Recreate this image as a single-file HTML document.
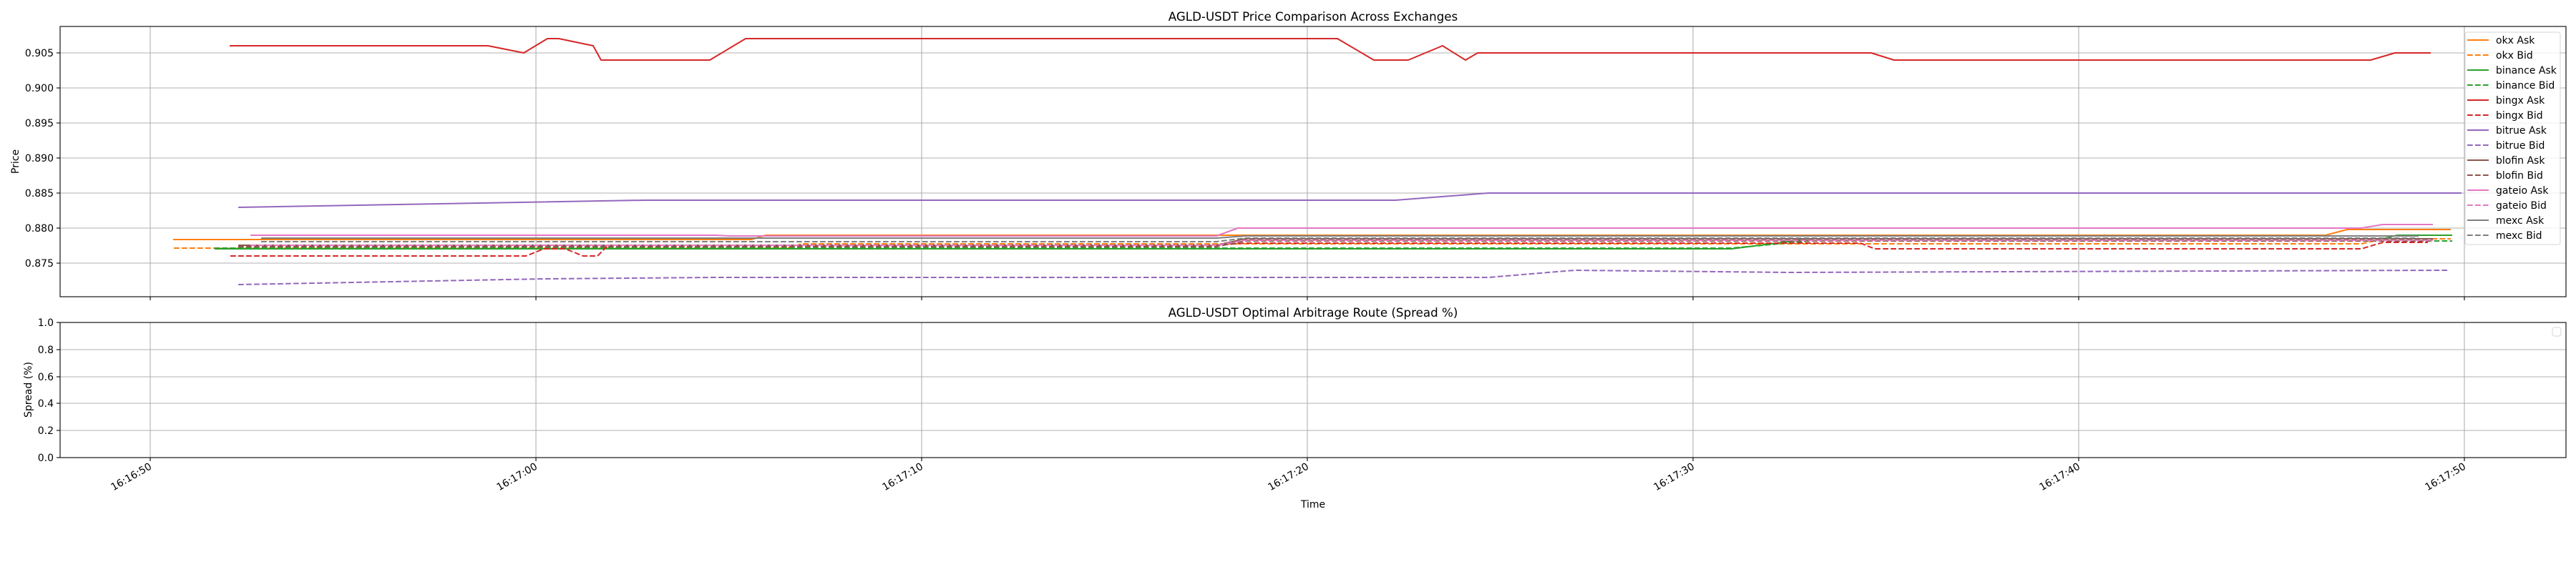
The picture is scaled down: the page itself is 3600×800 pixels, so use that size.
<!DOCTYPE html>
<html><head><meta charset="utf-8"><style>
html,body{margin:0;padding:0;background:#fff;}
svg{display:block;font-family:"DejaVu Sans","Liberation Sans",sans-serif;}
</style></head><body>
<svg width="3600" height="800" viewBox="0 0 3600 800" xmlns="http://www.w3.org/2000/svg">
<rect width="3600" height="800" fill="#fff"/>
<!-- top axes grid -->
<g stroke="#b0b0b0" stroke-width="1.1">
<line x1="84" y1="74" x2="3586" y2="74"/><line x1="84" y1="123" x2="3586" y2="123"/><line x1="84" y1="172" x2="3586" y2="172"/><line x1="84" y1="221" x2="3586" y2="221"/><line x1="84" y1="270" x2="3586" y2="270"/><line x1="84" y1="319" x2="3586" y2="319"/><line x1="84" y1="368" x2="3586" y2="368"/>
<line x1="210" y1="37" x2="210" y2="415"/><line x1="749" y1="37" x2="749" y2="415"/><line x1="1288" y1="37" x2="1288" y2="415"/><line x1="1827" y1="37" x2="1827" y2="415"/><line x1="2366" y1="37" x2="2366" y2="415"/><line x1="2905" y1="37" x2="2905" y2="415"/><line x1="3444" y1="37" x2="3444" y2="415"/>
</g>
<!-- bottom axes grid -->
<g stroke="#b0b0b0" stroke-width="1.1">
<line x1="84" y1="489" x2="3586" y2="489"/><line x1="84" y1="527" x2="3586" y2="527"/><line x1="84" y1="564" x2="3586" y2="564"/><line x1="84" y1="602" x2="3586" y2="602"/>
<line x1="210" y1="451" x2="210" y2="640"/><line x1="749" y1="451" x2="749" y2="640"/><line x1="1288" y1="451" x2="1288" y2="640"/><line x1="1827" y1="451" x2="1827" y2="640"/><line x1="2366" y1="451" x2="2366" y2="640"/><line x1="2905" y1="451" x2="2905" y2="640"/><line x1="3444" y1="451" x2="3444" y2="640"/>
</g>
<!-- data lines -->
<g fill="none" stroke-width="2" stroke-linejoin="round">
<polyline stroke="#ff7f0e" points="242,335 1050,335 1070,329 3250,329 3280,321 3425,321"/>
<polyline stroke="#ff7f0e" stroke-dasharray="7.7,3.3" points="243,347 1100,347 1120,341 3300,341 3330,334 3425,334"/>
<polyline stroke="#2ca02c" points="300,348 2420,348 2530,334 3330,334 3350,329 3427,329"/>
<polyline stroke="#2ca02c" stroke-dasharray="7.7,3.3" points="300,347 2420,347 2530,337 3427,337"/>
<polyline stroke="#d62728" points="321,64 682,64 732,74 765,54 781,54 829,64 840,84 992,84 1042,54 1869,54 1920,84 1968,84 2016,64 2048,84 2065,74 2615,74 2647,84 3313,84 3347,74 3397,74"/>
<polyline stroke="#d62728" stroke-dasharray="7.7,3.3" points="322,358 735,358 760,348 790,348 815,358 835,358 850,343 1700,343 1740,340 2600,340 2620,348 3300,348 3330,339 3393,339"/>
<polyline stroke="#9467bd" points="333,290 900,280 1950,280 2080,270 3440,270"/>
<polyline stroke="#9467bd" stroke-dasharray="7.7,3.3" points="333,398 760,390 1000,388 2080,388 2200,378 2500,381 3420,378"/>
<polyline stroke="#8c564b" points="333,343 1700,343 1740,334 3400,334"/>
<polyline stroke="#8c564b" stroke-dasharray="7.7,3.3" points="333,345 1700,345 1740,337 3400,337"/>
<polyline stroke="#e377c2" points="350,329 1000,329 1020,330 1700,330 1730,319 3300,319 3330,314 3400,314"/>
<polyline stroke="#e377c2" stroke-dasharray="7.7,3.3" points="350,343 1700,343 1740,336 3400,336"/>
<polyline stroke="#7f7f7f" points="365,333 1700,333 1740,330 3380,330"/>
<polyline stroke="#7f7f7f" stroke-dasharray="7.7,3.3" points="365,338 1700,338 1740,333 3380,333"/>
</g>
<!-- axes frames -->
<rect x="84" y="37" width="3502" height="378" fill="none" stroke="#000" stroke-width="1.1"/>
<rect x="84" y="451" width="3502" height="189" fill="none" stroke="#000" stroke-width="1.1"/>
<!-- ticks -->
<g stroke="#000" stroke-width="1.1">
<line x1="79" y1="74" x2="84" y2="74"/><line x1="79" y1="123" x2="84" y2="123"/><line x1="79" y1="172" x2="84" y2="172"/><line x1="79" y1="221" x2="84" y2="221"/><line x1="79" y1="270" x2="84" y2="270"/><line x1="79" y1="319" x2="84" y2="319"/><line x1="79" y1="368" x2="84" y2="368"/>
<line x1="79" y1="451" x2="84" y2="451"/><line x1="79" y1="489" x2="84" y2="489"/><line x1="79" y1="527" x2="84" y2="527"/><line x1="79" y1="564" x2="84" y2="564"/><line x1="79" y1="602" x2="84" y2="602"/><line x1="79" y1="640" x2="84" y2="640"/>
<line x1="210" y1="415" x2="210" y2="420"/><line x1="749" y1="415" x2="749" y2="420"/><line x1="1288" y1="415" x2="1288" y2="420"/><line x1="1827" y1="415" x2="1827" y2="420"/><line x1="2366" y1="415" x2="2366" y2="420"/><line x1="2905" y1="415" x2="2905" y2="420"/><line x1="3444" y1="415" x2="3444" y2="420"/>
<line x1="210" y1="640" x2="210" y2="645"/><line x1="749" y1="640" x2="749" y2="645"/><line x1="1288" y1="640" x2="1288" y2="645"/><line x1="1827" y1="640" x2="1827" y2="645"/><line x1="2366" y1="640" x2="2366" y2="645"/><line x1="2905" y1="640" x2="2905" y2="645"/><line x1="3444" y1="640" x2="3444" y2="645"/>
</g>
<g font-size="14" fill="#000" text-anchor="end">
<text x="75" y="79">0.905</text><text x="75" y="128">0.900</text><text x="75" y="177">0.895</text><text x="75" y="226">0.890</text><text x="75" y="275">0.885</text><text x="75" y="324">0.880</text><text x="75" y="373">0.875</text>
<text x="75" y="456">1.0</text><text x="75" y="494">0.8</text><text x="75" y="532">0.6</text><text x="75" y="569">0.4</text><text x="75" y="607">0.2</text><text x="75" y="645">0.0</text>
<text transform="translate(213,655) rotate(-30)">16:16:50</text>
<text transform="translate(752,655) rotate(-30)">16:17:00</text>
<text transform="translate(1291,655) rotate(-30)">16:17:10</text>
<text transform="translate(1830,655) rotate(-30)">16:17:20</text>
<text transform="translate(2369,655) rotate(-30)">16:17:30</text>
<text transform="translate(2908,655) rotate(-30)">16:17:40</text>
<text transform="translate(3447,655) rotate(-30)">16:17:50</text>
</g>
<g font-size="14" fill="#000" text-anchor="middle">
<text x="1835" y="710">Time</text>
<text transform="translate(26,226) rotate(-90)">Price</text>
<text transform="translate(44,545) rotate(-90)">Spread (%)</text>
<text x="1835" y="29" font-size="16.7">AGLD-USDT Price Comparison Across Exchanges</text>
<text x="1835" y="443" font-size="16.7">AGLD-USDT Optimal Arbitrage Route (Spread %)</text>
</g>
<!-- legend -->
<rect x="3445" y="45" width="133" height="297" rx="3" fill="#fff" fill-opacity="0.8" stroke="#d6d6d6" stroke-width="1"/>
<g stroke-width="2">
<line x1="3448" y1="56" x2="3478" y2="56" stroke="#ff7f0e"/>
<line x1="3448" y1="77" x2="3478" y2="77" stroke="#ff7f0e" stroke-dasharray="7.7,3.3"/>
<line x1="3448" y1="98" x2="3478" y2="98" stroke="#2ca02c"/>
<line x1="3448" y1="119" x2="3478" y2="119" stroke="#2ca02c" stroke-dasharray="7.7,3.3"/>
<line x1="3448" y1="140" x2="3478" y2="140" stroke="#d62728"/>
<line x1="3448" y1="161" x2="3478" y2="161" stroke="#d62728" stroke-dasharray="7.7,3.3"/>
<line x1="3448" y1="182" x2="3478" y2="182" stroke="#9467bd"/>
<line x1="3448" y1="203" x2="3478" y2="203" stroke="#9467bd" stroke-dasharray="7.7,3.3"/>
<line x1="3448" y1="224" x2="3478" y2="224" stroke="#8c564b"/>
<line x1="3448" y1="245" x2="3478" y2="245" stroke="#8c564b" stroke-dasharray="7.7,3.3"/>
<line x1="3448" y1="266" x2="3478" y2="266" stroke="#e377c2"/>
<line x1="3448" y1="287" x2="3478" y2="287" stroke="#e377c2" stroke-dasharray="7.7,3.3"/>
<line x1="3448" y1="308" x2="3478" y2="308" stroke="#7f7f7f"/>
<line x1="3448" y1="329" x2="3478" y2="329" stroke="#7f7f7f" stroke-dasharray="7.7,3.3"/>
</g>
<g font-size="14" fill="#000">
<text x="3488" y="61">okx Ask</text><text x="3488" y="82">okx Bid</text><text x="3488" y="103">binance Ask</text><text x="3488" y="124">binance Bid</text><text x="3488" y="145">bingx Ask</text><text x="3488" y="166">bingx Bid</text><text x="3488" y="187">bitrue Ask</text><text x="3488" y="208">bitrue Bid</text><text x="3488" y="229">blofin Ask</text><text x="3488" y="250">blofin Bid</text><text x="3488" y="271">gateio Ask</text><text x="3488" y="292">gateio Bid</text><text x="3488" y="313">mexc Ask</text><text x="3488" y="334">mexc Bid</text>
</g>
<rect x="3567" y="458" width="12" height="12" rx="3" fill="#fff" stroke="#d6d6d6" stroke-width="1"/>
</svg>
</body></html>
